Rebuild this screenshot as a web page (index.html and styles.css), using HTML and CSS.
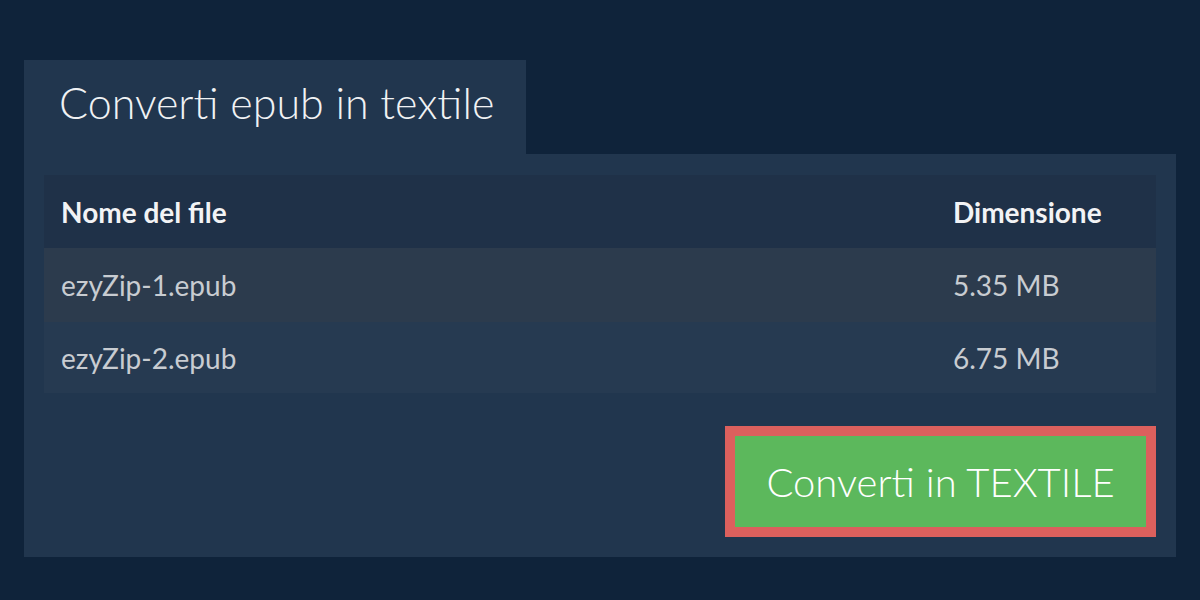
FILE: index.html
```html
<!DOCTYPE html>
<html lang="it">
<head>
<meta charset="utf-8">
<title>Converti epub in textile</title>
<link rel="stylesheet" href="styles.css">
</head>
<body>
<div class="wrap">
  <div class="tab"><h1 class="title">Converti epub in textile</h1></div>
  <div class="panel">
    <table class="files">
      <thead>
        <tr class="head"><th class="c-name">Nome del file</th><th class="c-size">Dimensione</th></tr>
      </thead>
      <tbody>
        <tr class="row odd"><td class="c-name">ezyZip-1.epub</td><td class="c-size">5.35 MB</td></tr>
        <tr class="row even"><td class="c-name">ezyZip-2.epub</td><td class="c-size">6.75 MB</td></tr>
      </tbody>
    </table>
    <div class="actions">
      <button class="convert">Converti in TEXTILE</button>
    </div>
  </div>
</div>
</body>
</html>
```

FILE: styles.css
```css
html, body {
  margin: 0;
  padding: 0;
  background: #0f233a;
  font-family: Lato, "Open Sans", sans-serif;
}
.wrap {
  padding: 60px 24px 43px;
}
.tab {
  display: inline-block;
  width: 502px;
  height: 94px;
  box-sizing: border-box;
  background: #21364e;
  padding-left: 35px;
}
.title {
  margin: 0;
  font-weight: 300;
  font-size: 43px;
  line-height: 86px;
  color: #f0f2f4;
}
.panel {
  background: #21364e;
  padding: 21px 20px 20px;
}
.files {
  width: 100%;
  border-collapse: collapse;
  font-size: 28px;
}
.files th, .files td {
  text-align: left;
  padding: 0 17px;
}
.files .c-size {
  width: 186px;
}
.head {
  background: #1f3148;
  height: 73px;
  color: #f2f3f5;
}
.head th { font-weight: 700; }
.row { color: #c8ccd1; }
.odd { background: #2c3b4d; height: 74px; }
.even { background: #263a51; height: 71px; }
.actions {
  display: flex;
  justify-content: flex-end;
  margin-top: 33px;
}
.convert {
  background: #5cb85c;
  border: 10px solid #dc605d;
  color: #ffffff;
  font-family: inherit;
  font-weight: 300;
  font-size: 40px;
  width: 431px;
  height: 111px;
  padding: 0;
  cursor: pointer;
}
```
